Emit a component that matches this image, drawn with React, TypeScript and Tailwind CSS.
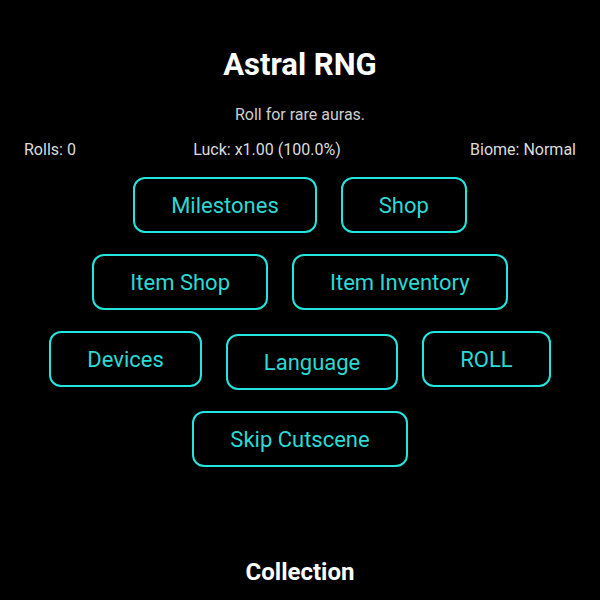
import React, { useState } from 'react';

const rows: string[][] = [
  ['Milestones', 'Shop'],
  ['Item Shop', 'Item Inventory'],
  ['Devices', 'Language', 'ROLL'],
  ['Skip Cutscene'],
];

const App: React.FC = () => {
  const [rolls, setRolls] = useState(0);

  return (
    <div
      className="min-h-[600px] bg-black text-white flex flex-col items-center pt-[46px]"
      style={{ fontFamily: 'Roboto, "Noto Sans", sans-serif' }}
    >
      <h1 className="text-[31px] leading-[37px] font-bold">Astral RNG</h1>
      <p className="mt-[22px] text-[16px] leading-[20px] text-[#cfcfcf]">Roll for rare auras.</p>

      {/* Stats bar */}
      <div className="mt-[15px] w-full px-6 flex justify-between text-[16px] leading-[20px] text-[#dcdcdc]">
        <span>Rolls: {rolls}</span>
        <span className="mr-3">Luck: x1.00 (100.0%)</span>
        <span>Biome: Normal</span>
      </div>

      {/* Menu buttons */}
      <div className="mt-[17px] flex flex-col items-center gap-[21px]">
        {rows.map((row, i) => (
          <div key={i} className="flex items-start gap-6">
            {row.map((label) => (
              <button
                key={label}
                onClick={label === 'ROLL' ? () => setRolls(rolls + 1) : undefined}
                className={
                  'px-9 pt-[13px] pb-[11px] border-2 border-[#22e5de] rounded-xl text-[22px] leading-[28px] text-[#2adad3] bg-black ' +
                  (label === 'Language' ? 'mt-[3px]' : '')
                }
              >
                {label}
              </button>
            ))}
          </div>
        ))}
      </div>

      <h2 className="mt-[91px] text-[24px] leading-[29px] font-bold">Collection</h2>
    </div>
  );
};

export default App;
